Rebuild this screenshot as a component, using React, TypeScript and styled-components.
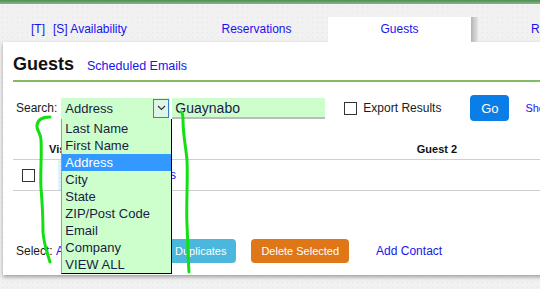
import React from "react"
import styled, { createGlobalStyle } from "styled-components"

const GlobalStyle = createGlobalStyle`
  html, body {
    margin: 0;
    padding: 0;
  }
  body {
    width: 540px;
    height: 289px;
    overflow: hidden;
    font-family: "Liberation Sans", Arial, sans-serif;
    background-color: #f1f1f1;
    background-image: radial-gradient(#e4e4e4 0.6px, transparent 0.9px);
    background-size: 5px 5px;
  }
`

const LINK = "#1a12f0"

const Page = styled.div`
  position: relative;
  width: 540px;
  height: 289px;
  overflow: hidden;
`

const TopStrip = styled.div`
  height: 4px;
  background: linear-gradient(#4e8c55, #86b886);
`

const TabBar = styled.div`
  display: flex;
  align-items: flex-end;
  height: 38px;
`

const Tab = styled.div<{ $active?: boolean; $width: number; $pad?: number }>`
  flex: none;
  width: ${(p) => p.$width}px;
  height: 25px;
  line-height: 25px;
  font-size: 12px;
  color: ${LINK};
  box-sizing: border-box;
  padding-left: ${(p) => (p.$pad ? `${p.$pad}px` : 0)};
  text-align: ${(p) => (p.$pad ? "left" : "center")};
  background: ${(p) => (p.$active ? "#fff" : "transparent")};
  white-space: nowrap;
`

const TabShadow = styled.div`
  flex: none;
  width: 7px;
  height: 25px;
  background: linear-gradient(90deg, #b4b4b4, #e4e4e4);
`

const TabLinks = styled.span`
  display: inline-flex;
  gap: 8px;
`

const Panel = styled.div`
  margin-left: 3px;
  width: 640px;
  background: #fff;
  box-shadow: 0 2px 4px rgba(0, 0, 0, 0.35);
  padding: 10px 0 12px 10px;
  box-sizing: border-box;
`

const Header = styled.div`
  display: flex;
  align-items: baseline;
  gap: 13px;
  height: 24px;
  line-height: 24px;
`

const Title = styled.h1`
  margin: 0;
  font-size: 18px;
  font-weight: bold;
  color: #111;
`

const Link = styled.a<{ $size?: number }>`
  flex: none;
  color: ${LINK};
  font-size: ${(p) => p.$size || 12}px;
  text-decoration: none;
  white-space: nowrap;
`

const Rule = styled.div`
  height: 2px;
  margin-top: 4px;
  background: #82bb66;
`

const SearchRow = styled.div`
  display: flex;
  align-items: center;
  height: 26px;
  margin-top: 13px;
  padding-left: 3px;
`

const Label = styled.span`
  flex: none;
  font-size: 12px;
  color: #1a1a1a;
  white-space: nowrap;
`

const Select = styled.div`
  flex: none;
  position: relative;
  margin-left: 4px;
  width: 109px;
  height: 21px;
  background: #ccffcc;
  font-size: 13px;
  color: #1b1b45;
  line-height: 21px;
  padding-left: 4px;
  box-sizing: border-box;
`

const Arrow = styled.div`
  position: absolute;
  right: 1px;
  top: 1px;
  width: 16px;
  height: 19px;
  box-sizing: border-box;
  border: 1px solid #3a7fcf;
  background: #dff5e6;
  display: flex;
  align-items: center;
  justify-content: center;
`

const Menu = styled.ul`
  position: absolute;
  left: 0;
  top: 21px;
  z-index: 5;
  margin: 0;
  padding: 1px 0 0;
  list-style: none;
  width: 111px;
  box-sizing: border-box;
  background: #ccffcc;
  border: 1px solid #000;
  border-left-color: #9a9a9a;
  border-top: none;
`

const Option = styled.li<{ $selected?: boolean }>`
  height: 17px;
  line-height: 17px;
  padding-left: 3px;
  font-size: 13px;
  white-space: nowrap;
  color: ${(p) => (p.$selected ? "#fff" : "#1b1b45")};
  background: ${(p) => (p.$selected ? "#3399ff" : "transparent")};
`

const TextInput = styled.div`
  flex: none;
  margin-left: 2px;
  width: 153px;
  height: 21px;
  box-sizing: border-box;
  background: #ccffcc;
  border-bottom: 2px solid #bcbcbc;
  padding-left: 3px;
  font-size: 14px;
  line-height: 20px;
  color: #1b1b45;
`

const Check = styled.span<{ $ml?: number }>`
  display: inline-block;
  flex: none;
  width: 13px;
  height: 13px;
  margin-left: ${(p) => p.$ml || 0}px;
  box-sizing: border-box;
  border: 1px solid #333;
  background: #fff;
`

const Button = styled.button<{ $bg: string; $ml: number; $h?: number; $size?: number }>`
  flex: none;
  margin-left: ${(p) => p.$ml}px;
  height: ${(p) => p.$h || 24}px;
  padding: 0 10px;
  border: none;
  border-radius: 4px;
  background: ${(p) => p.$bg};
  color: #fff;
  font-family: "Liberation Sans", Arial, sans-serif;
  font-size: ${(p) => p.$size || 11}px;
  white-space: nowrap;
`

const TableHead = styled.div`
  display: grid;
  grid-template-columns: 32px 300px 184px;
  align-items: center;
  height: 20px;
  margin-top: 18px;
  border-bottom: 1px solid #cfcfcf;
  font-size: 11px;
  font-weight: bold;
  color: #111;
`

const HeadCell = styled.div<{ $center?: boolean }>`
  text-align: ${(p) => (p.$center ? "center" : "left")};
  padding-left: ${(p) => (p.$center ? 0 : 4)}px;
  white-space: nowrap;
`

const TableRow = styled.div`
  display: grid;
  grid-template-columns: 45px 114px 1fr;
  height: 30px;
  border-bottom: 1px solid #cfcfcf;
`

const CheckCell = styled.div`
  display: flex;
  align-items: center;
  padding-left: 9px;
`

const VisitCell = styled.div`
  display: flex;
  align-items: center;
  padding-left: 48px;
  background-color: #e3f3fb;
  background-image: radial-gradient(#d3e9f4 0.6px, transparent 0.9px);
  background-size: 4px 4px;
  overflow: visible;
`

const Actions = styled.div`
  display: flex;
  align-items: center;
  height: 24px;
  margin-top: 48px;
  padding-left: 3px;
`

const Scribble = styled.svg`
  position: absolute;
  left: 0;
  top: 0;
  z-index: 10;
  pointer-events: none;
`

const options = [
  "Last Name",
  "First Name",
  "Address",
  "City",
  "State",
  "ZIP/Post Code",
  "Email",
  "Company",
  "VIEW ALL",
]

export default function App() {
  return (
    <Page>
      <GlobalStyle />
      <TopStrip />
      <TabBar>
        <Tab $width={185} $pad={31}>
          <TabLinks>
            <span>[T]</span>
            <span>[S]</span>
          </TabLinks>{" "}
          Availability
        </Tab>
        <Tab $width={143}>Reservations</Tab>
        <Tab $width={143} $active>
          Guests
        </Tab>
        <TabShadow />
        <Tab $width={100} $pad={53}>
          Rates
        </Tab>
      </TabBar>

      <Panel>
        <Header>
          <Title>Guests</Title>
          <Link $size={12.5}>Scheduled Emails</Link>
        </Header>
        <Rule />

        <SearchRow>
          <Label>Search:</Label>
          <Select>
            Address
            <Arrow>
              <svg width="9" height="6" viewBox="0 0 9 6">
                <path d="M1 1l3.5 3.5L8 1" fill="none" stroke="#333" strokeWidth="1.2" />
              </svg>
            </Arrow>
            <Menu>
              {options.map((o) => (
                <Option key={o} $selected={o === "Address"}>
                  {o}
                </Option>
              ))}
            </Menu>
          </Select>
          <TextInput>Guaynabo</TextInput>
          <Check $ml={19} />
          <Label style={{ marginLeft: 6 }}>Export Results</Label>
          <Button $bg="#0b7de6" $ml={29} $h={26} $size={13} style={{ width: 39 }}>
            Go
          </Button>
          <Link $size={11} style={{ marginLeft: 16 }}>
            Show All
          </Link>
        </SearchRow>

        <TableHead>
          <div />
          <HeadCell>Visitor</HeadCell>
          <HeadCell $center>Guest 2</HeadCell>
        </TableHead>
        <TableRow>
          <CheckCell>
            <Check />
          </CheckCell>
          <VisitCell>
            <Link $size={12}>Reservations</Link>
          </VisitCell>
          <div />
        </TableRow>

        <Actions>
          <Label>Select:&nbsp;</Label>
          <Link>All</Link>
          <Link style={{ marginLeft: 8 }}>None</Link>
          <Button $bg="#4cb7dc" $ml={59}>
            Duplicates
          </Button>
          <Button $bg="#df7618" $ml={15}>
            Delete Selected
          </Button>
          <Link style={{ marginLeft: 27 }}>Add Contact</Link>
        </Actions>
      </Panel>

      <Scribble width="540" height="289" viewBox="0 0 540 289">
        <path
          d="M50 117 C44 117 38 119 37 125 C36 130 41 133 41 140 C42 155 40 175 41 188 C42 200 43 215 43 232 C44 245 47 252 50 262"
          fill="none"
          stroke="#12e012"
          strokeWidth="3"
          strokeLinecap="round"
        />
        <path
          d="M181 112 C183 113 183 116 183 120 C183 135 186 148 187 160 C188 180 186 205 187 225 C188 245 188 258 189 272"
          fill="none"
          stroke="#12e012"
          strokeWidth="3"
          strokeLinecap="round"
        />
      </Scribble>
    </Page>
  )
}
